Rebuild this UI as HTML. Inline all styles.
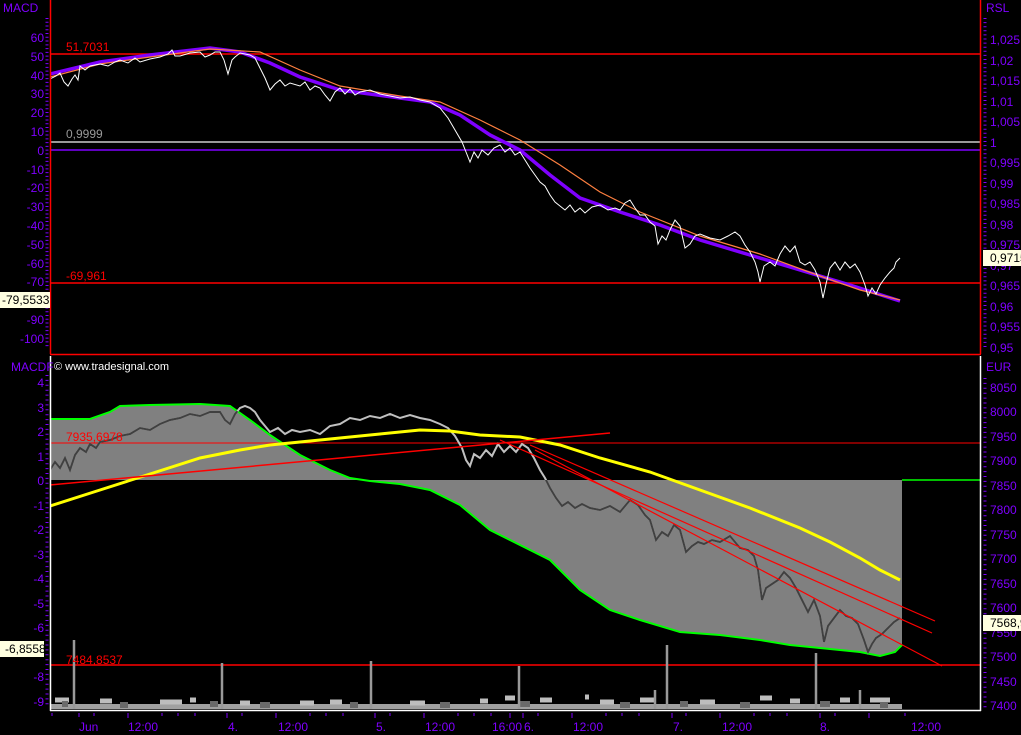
<!DOCTYPE html>
<html><head><meta charset="utf-8"><style>
html,body{margin:0;padding:0;background:#000;width:1021px;height:735px;overflow:hidden}
svg{display:block}
text{font-family:"Liberation Sans",sans-serif;font-size:12px}
.p{fill:#7f00ff}
</style></head><body>
<svg width="1021" height="735" viewBox="0 0 1021 735" xmlns="http://www.w3.org/2000/svg">
<defs>
<clipPath id="ga"><polygon points="50,419 90,419 110,412 120,406 150,405 200,404 230,406 250,420 270,435 300,455 330,470 350,478 370,481 400,484 430,490 460,505 490,530 520,545 550,560 580,590 610,610 640,620 680,632 720,635 760,640 790,645 820,648 860,652 880,656 895,652 902,645 902,480 50,480"/></clipPath>
<clipPath id="tp"><rect x="51" y="1" width="929" height="352"/></clipPath>
<clipPath id="bp"><rect x="51" y="356" width="929" height="353"/></clipPath>
</defs>
<g clip-path="url(#tp)">
<line x1="50" y1="54" x2="981" y2="54" stroke="#f00" stroke-width="1.5"/>
<line x1="50" y1="142" x2="981" y2="142" stroke="#999" stroke-width="2"/>
<line x1="50" y1="150" x2="981" y2="150" stroke="#7f00ff" stroke-width="1.5"/>
<line x1="50" y1="283" x2="981" y2="283" stroke="#f00" stroke-width="1.5"/>
<polyline fill="none" stroke="#7f00ff" stroke-width="3.5" points="50,74 100,62 150,55 210,48 240,52 270,63 300,77 340,90 400,98 430,102 460,115 490,135 520,150 550,175 580,198 620,212 660,225 700,240 750,255 800,270 850,285 900,301"/>
<polyline fill="none" stroke="#ff8040" stroke-width="1.2" points="50,77 100,64 150,57 210,49 260,52 300,70 340,86 400,96 440,102 480,120 520,140 560,165 600,192 640,212 700,236 760,254 820,276 860,290 900,300"/>
<polyline fill="none" stroke="#fff" stroke-width="1" points="50,79 56,76 60,73 64,82 68,86 72,79 75,75 78,80 80,66 85,70 90,66 100,64 108,66 115,62 120,60 128,63 135,58 140,62 150,59 160,57 168,54 172,50 175,56 180,56 190,53 200,52 205,57 210,55 215,52 220,52 224,60 228,74 232,60 235,57 240,53 250,55 255,58 260,68 265,78 270,90 275,84 280,80 285,86 290,83 300,86 305,82 310,90 315,86 320,88 325,95 330,101 335,92 340,88 345,94 350,89 355,95 360,92 370,90 380,94 390,96 400,98 410,97 420,100 430,102 440,108 448,118 455,130 462,142 466,152 470,162 474,152 478,158 482,150 488,155 494,148 500,145 505,152 510,148 515,155 520,152 525,160 530,168 535,175 540,182 545,186 550,195 555,202 560,206 565,210 570,205 575,212 580,208 585,213 592,207 600,205 608,210 615,208 620,210 625,203 630,200 635,208 640,215 645,215 650,222 655,226 658,244 662,236 666,240 670,230 675,220 680,226 685,248 690,244 695,236 700,234 710,238 720,240 728,236 735,232 740,236 745,245 750,252 755,262 758,272 760,282 764,266 770,262 775,266 780,254 785,246 790,252 795,246 800,262 805,265 810,262 815,270 820,282 823,298 826,284 830,268 835,262 840,270 845,262 850,268 855,264 860,272 865,285 868,296 872,288 876,294 880,285 885,278 890,272 894,268 896,262 900,258"/>
</g>
<g clip-path="url(#bp)">
<polygon fill="#808080" points="50,419 90,419 110,412 120,406 150,405 200,404 230,406 250,420 270,435 300,455 330,470 350,478 370,481 400,484 430,490 460,505 490,530 520,545 550,560 580,590 610,610 640,620 680,632 720,635 760,640 790,645 820,648 860,652 880,656 895,652 902,645 902,480 50,480"/>
<polyline fill="none" stroke="#0f0" stroke-width="2" points="50,419 90,419 110,412 120,406 150,405 200,404 230,406 250,420 270,435 300,455 330,470 350,478 370,481 400,484 430,490 460,505 490,530 520,545 550,560 580,590 610,610 640,620 680,632 720,635 760,640 790,645 820,648 860,652 880,656 895,652 902,645"/>
<line x1="902" y1="480" x2="981" y2="480" stroke="#0f0" stroke-width="1.5"/>
<line x1="50" y1="443" x2="981" y2="443" stroke="#f00" stroke-width="1"/>
<line x1="50" y1="665" x2="981" y2="665" stroke="#f00" stroke-width="1.5"/>
<polyline fill="none" stroke="#c0c0c0" stroke-width="2" points="50,470 55,462 60,468 65,458 70,470 75,455 80,448 86,452 90,444 96,448 100,442 110,440 120,436 130,434 140,428 150,430 160,424 170,420 180,418 190,414 200,416 210,412 220,412 225,420 230,424 235,414 240,408 245,406 250,408 255,412 260,420 265,426 270,432 278,428 285,434 292,430 300,432 310,430 320,434 330,426 340,424 350,418 360,420 370,416 380,418 390,414 400,418 410,415 420,418 430,420 440,424 448,428 455,436 462,448 466,460 470,466 474,454 480,458 486,450 492,456 498,444 504,452 510,446 516,452 522,444 528,448 534,458 540,470 545,478 550,488 556,498 562,506 568,502 575,508 582,504 590,508 600,510 610,506 620,512 630,500 638,505 645,515 650,520 656,540 662,532 668,536 674,525 680,530 686,552 692,546 698,542 704,544 712,540 720,542 730,536 740,548 748,550 754,556 758,570 762,600 766,588 772,584 778,580 784,572 790,578 796,588 802,600 808,612 814,600 820,616 824,642 828,626 834,618 840,610 846,616 852,618 858,624 864,640 868,652 872,644 876,638 882,634 888,628 894,622 900,618"/>
<g clip-path="url(#ga)"><polyline fill="none" stroke="#404040" stroke-width="2" points="50,470 55,462 60,468 65,458 70,470 75,455 80,448 86,452 90,444 96,448 100,442 110,440 120,436 130,434 140,428 150,430 160,424 170,420 180,418 190,414 200,416 210,412 220,412 225,420 230,424 235,414 240,408 245,406 250,408 255,412 260,420 265,426 270,432 278,428 285,434 292,430 300,432 310,430 320,434 330,426 340,424 350,418 360,420 370,416 380,418 390,414 400,418 410,415 420,418 430,420 440,424 448,428 455,436 462,448 466,460 470,466 474,454 480,458 486,450 492,456 498,444 504,452 510,446 516,452 522,444 528,448 534,458 540,470 545,478 550,488 556,498 562,506 568,502 575,508 582,504 590,508 600,510 610,506 620,512 630,500 638,505 645,515 650,520 656,540 662,532 668,536 674,525 680,530 686,552 692,546 698,542 704,544 712,540 720,542 730,536 740,548 748,550 754,556 758,570 762,600 766,588 772,584 778,580 784,572 790,578 796,588 802,600 808,612 814,600 820,616 824,642 828,626 834,618 840,610 846,616 852,618 858,624 864,640 868,652 872,644 876,638 882,634 888,628 894,622 900,618"/></g>
<polyline fill="none" stroke="#ff0" stroke-width="3" points="50,506 100,490 150,474 200,458 240,450 270,445 320,440 380,434 420,430 450,431 480,435 520,437 560,445 600,458 650,472 700,490 750,508 800,528 830,542 860,558 880,570 900,580"/>
<line x1="50" y1="485" x2="610" y2="433" stroke="#f00" stroke-width="1.5"/>
<line x1="530" y1="445" x2="935" y2="621" stroke="#f00" stroke-width="1.2"/>
<line x1="500" y1="440" x2="932" y2="633" stroke="#f00" stroke-width="1.2"/>
<line x1="535" y1="450" x2="942" y2="666" stroke="#f00" stroke-width="1.2"/>
<rect x="51" y="704" width="851" height="6" fill="#a0a0a0"/>
<path d="M55 700h14M100 701h12M160 702h22M190 700h6M240 703h10M300 703h14M330 702h12M410 703h15M480 701h8M505 698h10M540 700h12M585 697h4M600 702h14M640 700h14M700 702h15M760 698h12M790 701h10M840 700h10M870 700h20" stroke="#bdbdbd" stroke-width="5"/>
<path d="M62 704h6M120 705h8M210 704h8M260 705h10M350 705h8M440 705h10M520 704h10M620 705h10M680 704h8M740 705h10M820 704h10M880 705h8" stroke="#6a6a6a" stroke-width="6"/>
<g stroke="#999" stroke-width="2.5">
<line x1="74" y1="640" x2="74" y2="710"/><line x1="222" y1="663" x2="222" y2="710"/><line x1="371" y1="661" x2="371" y2="710"/><line x1="519" y1="666" x2="519" y2="710"/><line x1="667" y1="645" x2="667" y2="710"/><line x1="816" y1="653" x2="816" y2="710"/><line x1="655" y1="690" x2="655" y2="710"/><line x1="860" y1="690" x2="860" y2="710"/>
</g>
</g>
<text x="54" y="370" fill="#fff" style="font-size:11px">© www.tradesignal.com</text>
<line x1="50.5" y1="0" x2="50.5" y2="354" stroke="#f00" stroke-width="1.5"/>
<line x1="980.5" y1="0" x2="980.5" y2="354" stroke="#f00" stroke-width="1.5"/>
<line x1="50" y1="354.5" x2="981" y2="354.5" stroke="#f00" stroke-width="1.5"/>
<line x1="50.5" y1="356" x2="50.5" y2="711" stroke="#fff" stroke-width="1.5"/>
<line x1="980.5" y1="356" x2="980.5" y2="711" stroke="#fff" stroke-width="1.5"/>
<line x1="50" y1="710.5" x2="981" y2="710.5" stroke="#fff" stroke-width="1.5"/>
<line x1="47" y1="18" x2="47" y2="348" stroke="#7f00ff" stroke-width="3" stroke-dasharray="1 2.76"/>
<line x1="985" y1="18" x2="985" y2="350" stroke="#7f00ff" stroke-width="3" stroke-dasharray="1 3.1"/>
<line x1="47" y1="375" x2="47" y2="708" stroke="#7f00ff" stroke-width="3" stroke-dasharray="1 3.9"/>
<line x1="985" y1="378" x2="985" y2="708" stroke="#7f00ff" stroke-width="3" stroke-dasharray="1 3.9"/>
<text x="3" y="12" class="p">MACD</text>
<g class="p" text-anchor="end">
<text x="44" y="42">60</text><text x="44" y="61">50</text><text x="44" y="80">40</text><text x="44" y="98">30</text><text x="44" y="117">20</text><text x="44" y="136">10</text><text x="44" y="155">0</text><text x="44" y="174">-10</text><text x="44" y="192">-20</text><text x="44" y="211">-30</text><text x="44" y="230">-40</text><text x="44" y="249">-50</text><text x="44" y="268">-60</text><text x="44" y="286">-70</text><text x="44" y="324">-90</text><text x="44" y="343">-100</text>
</g>
<text x="66" y="51" fill="#f00">51,7031</text>
<text x="66" y="138" fill="#999">0,9999</text>
<text x="66" y="280" fill="#f00">-69,961</text>
<rect x="0" y="292" width="50" height="16" fill="#ffffe0"/>
<text x="2" y="304" fill="#000">-79,5533</text>
<text x="986" y="12" class="p">RSL</text>
<g class="p">
<text x="990" y="44">1,025</text><text x="990" y="65">1,02</text><text x="990" y="85">1,015</text><text x="990" y="106">1,01</text><text x="990" y="126">1,005</text><text x="990" y="147">1</text><text x="990" y="167">0,995</text><text x="990" y="188">0,99</text><text x="990" y="208">0,985</text><text x="990" y="229">0,98</text><text x="990" y="249">0,975</text><text x="990" y="270">0,97</text><text x="990" y="290">0,965</text><text x="990" y="311">0,96</text><text x="990" y="331">0,955</text><text x="990" y="352">0,95</text>
</g>
<rect x="983" y="250" width="38" height="16" fill="#ffffe0"/>
<text x="990" y="262" fill="#000">0,9715</text>
<text x="11" y="371" class="p">MACDF</text>
<g class="p" text-anchor="end">
<text x="44" y="387">4</text><text x="44" y="412">3</text><text x="44" y="436">2</text><text x="44" y="461">1</text><text x="44" y="485">0</text><text x="44" y="510">-1</text><text x="44" y="534">-2</text><text x="44" y="559">-3</text><text x="44" y="583">-4</text><text x="44" y="608">-5</text><text x="44" y="632">-6</text><text x="44" y="681">-8</text><text x="44" y="706">-9</text>
</g>
<text x="66" y="441" fill="#f00">7935,6978</text>
<text x="66" y="664" fill="#f00">7484,8537</text>
<rect x="0" y="641" width="44" height="16" fill="#ffffe0"/>
<text x="5" y="653" fill="#000">-6,8558</text>
<text x="986" y="371" class="p">EUR</text>
<g class="p">
<text x="990" y="392">8050</text><text x="990" y="416">8000</text><text x="990" y="441">7950</text><text x="990" y="465">7900</text><text x="990" y="490">7850</text><text x="990" y="514">7800</text><text x="990" y="539">7750</text><text x="990" y="563">7700</text><text x="990" y="588">7650</text><text x="990" y="612">7600</text><text x="990" y="637">7550</text><text x="990" y="661">7500</text><text x="990" y="686">7450</text><text x="990" y="710">7400</text>
</g>
<rect x="983" y="615" width="38" height="16" fill="#ffffe0"/>
<text x="990" y="627" fill="#000">7568,9</text>
<g stroke="#7f00ff" stroke-width="1">
<path d="M52 713v3M79 713v4M94 713v3M128 713v5M162 713v3M178 713v3M195 713v3M227 713v5M242 713v3M276 713v5M310 713v3M326 713v3M343 713v3M375 713v5M390 713v3M424 713v5M458 713v3M474 713v3M491 713v3M510 713v5M523 713v5M538 713v3M572 713v5M606 713v3M622 713v3M639 713v3M672 713v5M686 713v3M720 713v5M754 713v3M770 713v3M787 713v3M820 713v5M835 713v3M869 713v5M905 713v3"/>
</g>
<g class="p">
<text x="79" y="731">Jun</text><text x="128" y="731">12:00</text><text x="228" y="731">4.</text><text x="278" y="731">12:00</text><text x="376" y="731">5.</text><text x="425" y="731">12:00</text><text x="492" y="731">16:00</text><text x="524" y="731">6.</text><text x="573" y="731">12:00</text><text x="673" y="731">7.</text><text x="722" y="731">12:00</text><text x="820" y="731">8.</text><text x="911" y="731">12:00</text>
</g>
</svg>
</body></html>
